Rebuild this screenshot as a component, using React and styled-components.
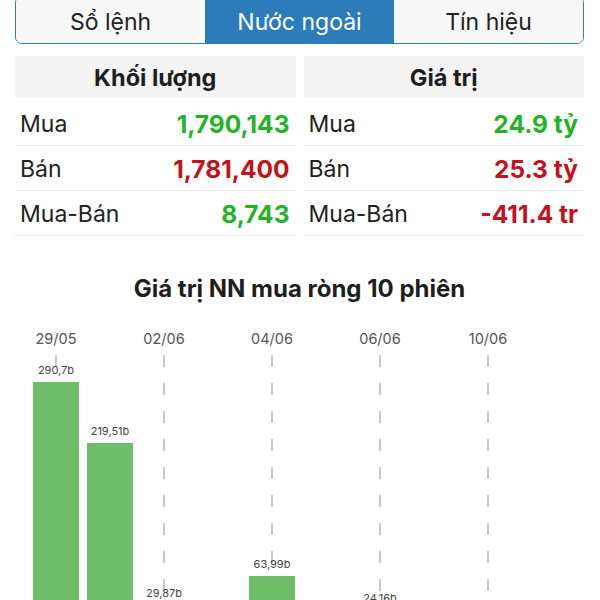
import React from "react";
import styled, { createGlobalStyle } from "styled-components";

const tabs = ["Sổ lệnh", "Nước ngoài", "Tín hiệu"];

const volume = [
  { label: "Mua", value: "1,790,143", tone: "up" },
  { label: "Bán", value: "1,781,400", tone: "down" },
  { label: "Mua-Bán", value: "8,743", tone: "up" },
];

const amount = [
  { label: "Mua", value: "24.9 tỷ", tone: "up" },
  { label: "Bán", value: "25.3 tỷ", tone: "down" },
  { label: "Mua-Bán", value: "-411.4 tr", tone: "down" },
];

const sessions = [
  { date: "29/05", value: 290.7, text: "290,7b" },
  { date: "", value: 219.51, text: "219,51b" },
  { date: "02/06", value: 29.87, text: "29,87b" },
  { date: "", value: 0, text: "" },
  { date: "04/06", value: 63.99, text: "63,99b" },
  { date: "", value: 0, text: "" },
  { date: "06/06", value: 24.16, text: "24,16b" },
  { date: "", value: 0, text: "" },
  { date: "10/06", value: 0, text: "" },
  { date: "", value: 0, text: "" },
];

const PX_PER_B = 0.857;

function StatTable({ title, rows }) {
  return (
    <Column>
      <Header>{title}</Header>
      {rows.map((r) => (
        <Row key={r.label}>
          <RowLabel>{r.label}</RowLabel>
          <RowValue $tone={r.tone}>{r.value}</RowValue>
        </Row>
      ))}
    </Column>
  );
}

export default function App() {
  return (
    <>
      <GlobalStyle />
      <Page>
        <Tabs>
          {tabs.map((t, i) => (
            <Tab key={t} $active={i === 1}>
              {t}
            </Tab>
          ))}
        </Tabs>
        <Tables>
          <StatTable title="Khối lượng" rows={volume} />
          <StatTable title="Giá trị" rows={amount} />
        </Tables>
        <ChartTitle>Giá trị NN mua ròng 10 phiên</ChartTitle>
        <Chart>
          {sessions.map((s, i) => (
            <Session key={i}>
              <DateLabel>{s.date}</DateLabel>
              <Track $grid={s.date !== ""}>
                {s.text && <BarValue>{s.text}</BarValue>}
                <Bar style={{ height: s.value * PX_PER_B }} />
              </Track>
            </Session>
          ))}
        </Chart>
      </Page>
    </>
  );
}

const GlobalStyle = createGlobalStyle`
  body {
    margin: 0;
    background: #fff;
    font-family: "Inter", "Roboto", "Liberation Sans", sans-serif;
    color: #222;
  }
`;

const Page = styled.div`
  padding: 0 16px 0 15px;
  height: 600px;
  overflow: hidden;
`;

const Tabs = styled.div`
  margin-top: -4px;
  display: flex;
  height: 48px;
  border: 1.5px solid #2c7cb9;
  border-radius: 7px;
  overflow: hidden;
  box-sizing: border-box;
`;

const Tab = styled.div`
  flex: 1;
  display: flex;
  align-items: center;
  justify-content: center;
  padding-top: 3px;
  font-size: 23px;
  background: ${(p) => (p.$active ? "#2c7cb9" : "#f8f8f8")};
  color: ${(p) => (p.$active ? "#fff" : "#222")};
`;

const Tables = styled.div`
  display: grid;
  grid-template-columns: 1fr 1fr;
  gap: 8px;
  margin-top: 12px;
`;

const Column = styled.div`
  display: flex;
  flex-direction: column;
`;

const Header = styled.div`
  height: 42px;
  margin-bottom: 3px;
  background: #f4f4f4;
  display: flex;
  align-items: center;
  justify-content: center;
  font-size: 23.5px;
  font-weight: 700;
  color: #1e1e1e;
`;

const Row = styled.div`
  height: 45px;
  box-sizing: border-box;
  display: flex;
  align-items: center;
  justify-content: space-between;
  padding: 2px 6px 0 5px;
  border-bottom: 1px solid #ececec;
`;

const RowLabel = styled.span`
  font-size: 23px;
  color: #222;
`;

const RowValue = styled.span`
  font-size: 24.5px;
  font-weight: 700;
  color: ${(p) => (p.$tone === "up" ? "#22b424" : "#c4111c")};
`;

const ChartTitle = styled.div`
  margin-top: 38px;
  text-align: center;
  font-size: 24px;
  font-weight: 700;
  color: #1e1e1e;
`;

const Chart = styled.div`
  display: flex;
  margin-top: 28px;
  padding-left: 14px;
`;

const Session = styled.div`
  width: 54px;
  display: flex;
  flex-direction: column;
  align-items: center;
`;

const DateLabel = styled.div`
  height: 16px;
  line-height: 16px;
  font-size: 14.5px;
  color: #555;
`;

const Track = styled.div`
  align-self: stretch;
  margin-top: 8px;
  height: 276px;
  display: flex;
  flex-direction: column;
  justify-content: flex-end;
  align-items: center;
  background-image: ${(p) =>
    p.$grid
      ? "repeating-linear-gradient(to bottom, #c8c8c8 0 12px, transparent 12px 28px)"
      : "none"};
  background-size: 2px 100%;
  background-position: center top;
  background-repeat: no-repeat;
`;

const BarValue = styled.div`
  font-size: 11px;
  color: #444;
  margin-bottom: 5px;
`;

const Bar = styled.div`
  width: 46px;
  background: #6dbd69;
`;
